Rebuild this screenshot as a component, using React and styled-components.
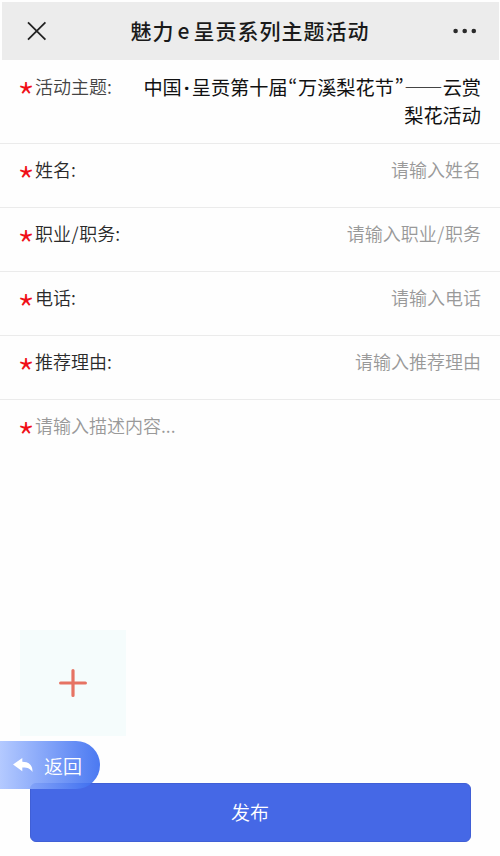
import React from "react"
import styled, { createGlobalStyle } from "styled-components"

const GlobalStyle = createGlobalStyle`
  * {
    box-sizing: border-box;
  }
  body {
    margin: 0;
    background: #fefefe;
    font-family: "Noto Sans CJK SC", sans-serif;
  }
`

const fields = [
  { label: "姓名:", placeholder: "请输入姓名" },
  { label: "职业/职务:", placeholder: "请输入职业/职务" },
  { label: "电话:", placeholder: "请输入电话" },
  { label: "推荐理由:", placeholder: "请输入推荐理由" },
]

export default function App() {
  return (
    <Page lang="zh-CN">
      <GlobalStyle />
      <Header>
        <CloseIcon />
        <Title>魅力<Latin>e</Latin>呈贡系列主题活动</Title>
        <MoreIcon />
      </Header>
      <Row height="84px">
        <Star>*</Star>
        <Label light>活动主题:</Label>
        <Topic>
          中国<Dot>·</Dot>呈贡第十届<Quote>“</Quote>万溪梨花节<Quote>”</Quote>
          <Dash>——</Dash>云赏
          <br />
          梨花活动
        </Topic>
      </Row>
      {fields.map(field => (
        <Row key={field.label} height="64px">
          <Star>*</Star>
          <Label>{withSlash(field.label)}</Label>
          <Placeholder>{withSlash(field.placeholder)}</Placeholder>
        </Row>
      ))}
      <Description>
        <Star>*</Star>
        <Hint>请输入描述内容...</Hint>
      </Description>
      <Upload>
        <PlusIcon />
      </Upload>
      <Footer>
        <Publish>发布</Publish>
        <Back>
          <ReplyIcon />
          返回
        </Back>
      </Footer>
    </Page>
  )
}

// gives the slash a little more room between the characters
const withSlash = text => {
  const [before, after] = text.split("/")
  if (!after) return text
  return (
    <>
      {before}
      <Slash>/</Slash>
      {after}
    </>
  )
}

const CloseIcon = () => (
  <svg width="20" height="20" viewBox="0 0 20 20">
    <path d="M1 1.3L18.4 18.7M18.4 1.3L1 18.7" stroke="#222" strokeWidth="1.8" />
  </svg>
)

const MoreIcon = () => (
  <svg width="24" height="6" viewBox="0 0 24 6" fill="#2a2a2a">
    <circle cx="2.6" cy="3" r="2.3" />
    <circle cx="11.7" cy="3" r="2.3" />
    <circle cx="20.8" cy="3" r="2.3" />
  </svg>
)

const PlusIcon = () => (
  <svg width="28" height="28" viewBox="0 0 28 28">
    <path
      d="M14 1.6V26.4M1.6 14H26.4"
      stroke="#e67363"
      strokeWidth="3.2"
      strokeLinecap="round"
    />
  </svg>
)

const ReplyIcon = () => (
  <svg width="20" height="15" viewBox="0 0 20 15" fill="#fff">
    <path d="M0 6.5L9.3 0V3.7C16 3.7 20 7.5 19.4 14C17.4 10.6 14.6 9.4 9.3 9.5V13.2Z" />
  </svg>
)

const Page = styled.div`
  width: 500px;
  height: 856px;
  padding-top: 2px;
  display: flex;
  flex-direction: column;
  overflow: hidden;
`

const Header = styled.header`
  height: 58px;
  flex: none;
  margin: 0 1px 0 2px;
  padding: 0 22px 0 25px;
  display: flex;
  align-items: center;
  justify-content: space-between;
  background: #ececec;
`

const Title = styled.h1`
  margin: 0;
  padding-bottom: 2px;
  font-size: 21px;
  font-weight: 500;
  letter-spacing: 1px;
  line-height: 30px;
  color: #1a1a1a;
  white-space: nowrap;
`

const Latin = styled.span`
  margin: 0 3px;
`

const Row = styled.div`
  height: ${props => props.height};
  flex: none;
  padding: 12px 19px 0 20px;
  display: flex;
  align-items: flex-start;
  border-bottom: 1px solid #ebebeb;
`

const Star = styled.span`
  width: 18px;
  flex: none;
  margin-left: -3px;
  font-size: 41px;
  font-weight: 300;
  line-height: 49px;
  height: 28px;
  color: #f01018;
`

const Label = styled.label`
  padding-top: ${props => (props.light ? "1px" : "0")};
  font-size: 18px;
  font-weight: 350;
  line-height: 27px;
  color: ${props => (props.light ? "#444" : "#2a2a2a")};
  white-space: nowrap;
`

const Slash = styled.span`
  margin: 0 0.6px;
`

const Topic = styled.div`
  flex: 1;
  padding-top: 1px;
  font-size: 19.2px;
  line-height: 28px;
  text-align: right;
  color: #111;
  white-space: nowrap;
`

const Quote = styled.span`
  margin: 0 0.6px;
  font-feature-settings: "pwid";
`

const Dot = styled.span`
  margin: 0 2.3px;
  font-family: "Noto Sans", sans-serif;
  font-weight: 700;
  line-height: 1;
`

const Dash = styled.span`
  font-weight: 500;
`

const Placeholder = styled.div`
  flex: 1;
  font-size: 18px;
  font-weight: 350;
  line-height: 27px;
  text-align: right;
  color: #999;
`

const Description = styled.div`
  height: 230px;
  flex: none;
  padding: 12px 20px 0;
  display: flex;
  align-items: flex-start;
`

const Hint = styled.span`
  font-size: 18px;
  font-weight: 350;
  line-height: 27px;
  color: #999;
`

const Upload = styled.div`
  width: 106px;
  height: 106px;
  flex: none;
  margin-left: 20px;
  display: flex;
  align-items: center;
  justify-content: center;
  background: #f5fcfc;
`

const Footer = styled.div`
  position: relative;
  flex: none;
  padding: 47px 29px 0 30px;
`

const Publish = styled.button`
  display: block;
  width: 100%;
  height: 59px;
  padding: 0 1px 3px 0;
  border: 1px solid #405fd6;
  border-radius: 6px;
  background: #4568e6;
  color: #fff;
  font-family: inherit;
  font-size: 19px;
  font-weight: 350;
`

/* floats over the left edge of the publish button */
const Back = styled.div`
  position: absolute;
  left: 0;
  top: 5px;
  width: 100px;
  height: 48px;
  padding-left: 13px;
  display: flex;
  align-items: center;
  gap: 11px;
  border-radius: 0 24px 24px 0;
  background: linear-gradient(
    90deg,
    rgba(172, 196, 255, 0.9),
    rgba(56, 107, 240, 0.9)
  );
  color: #fff;
  font-size: 19px;
  font-weight: 350;
`
